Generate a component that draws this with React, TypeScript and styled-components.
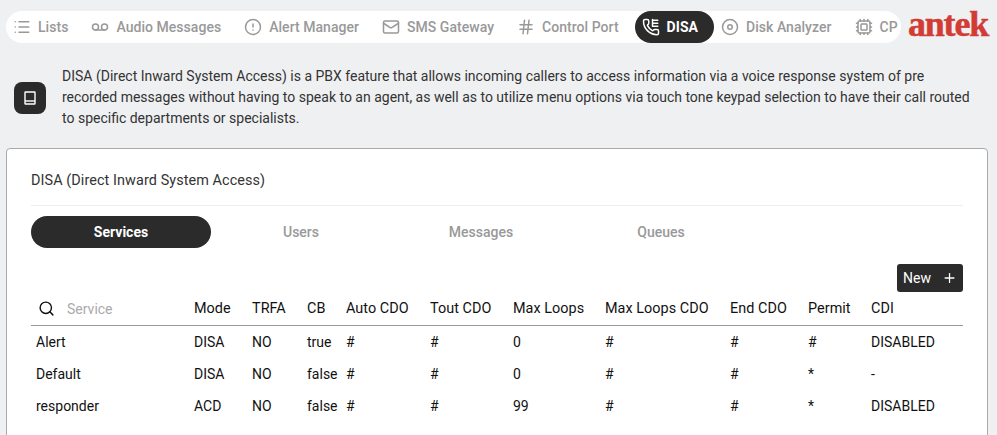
import React from "react";
import styled, { createGlobalStyle } from "styled-components";
import { List, Voicemail, CircleAlert, Mail, Hash, Cpu, Search, Plus } from "lucide-react";

const GlobalStyle = createGlobalStyle`
  html, body {
    margin: 0;
    height: 100%;
    overflow: hidden;
    background: #eff0f2;
    font-family: Roboto, "Liberation Sans", sans-serif;
    font-size: 14px;
    color: #333;
  }
`;

const Page = styled.div`
  padding: 11px 9px 0 6px;
`;

const Header = styled.header`
  display: flex;
  align-items: flex-start;
  gap: 8px;
`;

const Nav = styled.nav`
  flex: 1;
  min-width: 0;
  height: 32px;
  padding-right: 3px;
  border-radius: 16px;
  background: #fff;
`;

const NavScroller = styled.div`
  display: flex;
  height: 100%;
  overflow: hidden;
`;

const NavItem = styled.a<{ $active?: boolean }>`
  display: flex;
  flex-shrink: 0;
  align-items: center;
  gap: 8px;
  padding: 0 16px 0 8px;
  border-radius: 16px;
  font-weight: ${(p) => (p.$active ? 700 : 500)};
  letter-spacing: 0.04px;
  color: ${(p) => (p.$active ? "#fff" : "#999")};
  background: ${(p) => (p.$active ? "#2b2b2b" : "transparent")};

  svg {
    margin: 0 -1px;
  }
`;

const Logo = styled.div`
  width: 80px;
  height: 32px;
  margin: -8px 0 0 -1px;
  font-family: "Liberation Serif", serif;
  font-size: 36px;
  font-weight: 700;
  line-height: 42px;
  letter-spacing: -1.2px;
  white-space: nowrap;
  color: #d23c34;
  -webkit-text-stroke: 0.5px #d23c34;
`;

const Intro = styled.section`
  display: flex;
  align-items: center;
  gap: 16px;
  margin: 23px 0 19px 8px;
`;

const IntroIcon = styled.div`
  display: flex;
  flex-shrink: 0;
  align-items: center;
  justify-content: center;
  width: 32px;
  height: 32px;
  border-radius: 8px;
  background: #2b2b2b;
  color: #fff;
`;

const IntroText = styled.p`
  max-width: 912px;
  margin: 0;
  font-size: 14px;
  line-height: 21px;
  color: #333;
`;

const Card = styled.main`
  height: 320px;
  padding: 20px 24px 16px;
  border: 1px solid #aaa;
  border-radius: 4px;
  background: #fff;
`;

const CardTitle = styled.h2`
  margin: 0;
  padding-bottom: 12px;
  border-bottom: 1px solid #eee;
  font-size: 14.4px;
  font-weight: 400;
  letter-spacing: 0.09px;
  line-height: 24px;
  color: #333;
`;

const Tabs = styled.div`
  display: flex;
  margin-top: 10px;
`;

const Tab = styled.div<{ $active?: boolean }>`
  width: 180px;
  height: 32px;
  border-radius: 16px;
  font-weight: ${(p) => (p.$active ? 700 : 500)};
  line-height: 32px;
  text-align: center;
  color: ${(p) => (p.$active ? "#fff" : "#999")};
  background: ${(p) => (p.$active ? "#2b2b2b" : "transparent")};
`;

const Actions = styled.div`
  display: flex;
  justify-content: flex-end;
  margin-top: 16px;
`;

const NewButton = styled.button`
  display: flex;
  align-items: center;
  gap: 11px;
  width: 66px;
  height: 28px;
  padding: 0 6px;
  border: 0;
  border-radius: 3px;
  background: #2b2b2b;
  color: #fff;
  font: 400 14px Roboto, sans-serif;
`;

const Row = styled.div<{ $head?: boolean }>`
  display: grid;
  grid-template-columns: 163px 58px 55px 39px 84px 83px 92px 125px 78px 63px 1fr;
  align-items: center;
  height: ${(p) => (p.$head ? "33px" : "32px")};
  ${(p) => (p.$head ? "border-bottom: 1px solid #999;" : "")}
  color: #111;
`;

const HeadCell = styled.div`
  font-size: 14.4px;
  letter-spacing: 0.05px;
  white-space: nowrap;
`;

const SearchCell = styled.div`
  display: flex;
  align-items: center;
  gap: 12px;
  padding-left: 7px;
  color: #aaa;
`;

const NameCell = styled.div`
  padding-left: 5px;
`;

const Cell = styled.div``;

const DisaIcon = () => (
  <svg width="18" height="18" viewBox="0 0 24 24" fill="none" stroke="currentColor" strokeWidth="2" strokeLinecap="round" strokeLinejoin="round">
    <path d="M13.8 16.8a1 1 0 0 0 1.2-.3l.4-.5a2 2 0 0 1 1.6-.8h3a2 2 0 0 1 2 2v3a2 2 0 0 1-2 2A18 18 0 0 1 2 4a2 2 0 0 1 2-2h3a2 2 0 0 1 2 2v3a2 2 0 0 1-.8 1.6l-.5.3a1 1 0 0 0-.3 1.3 14 14 0 0 0 6.4 6.6z" />
    <path d="M14 2v9M14 3h7M14 7h7M14 11h7" />
  </svg>
);

const TargetIcon = () => (
  <svg width="18" height="18" viewBox="0 0 24 24" fill="none" stroke="currentColor" strokeWidth="2">
    <circle cx="12" cy="12" r="10" />
    <circle cx="12" cy="12" r="3" />
  </svg>
);

const BookIcon = () => (
  <svg width="16" height="16" viewBox="0 0 16 16" fill="none" stroke="currentColor" strokeWidth="1.4">
    <rect x="3" y="2" width="10" height="12" rx="0.5" />
    <path d="M3 11h10" />
  </svg>
);

const navItems = [
  { label: "Lists", icon: List },
  { label: "Audio Messages", icon: Voicemail },
  { label: "Alert Manager", icon: CircleAlert },
  { label: "SMS Gateway", icon: Mail },
  { label: "Control Port", icon: Hash },
  { label: "DISA", icon: DisaIcon, active: true },
  { label: "Disk Analyzer", icon: TargetIcon },
  { label: "CPU", icon: Cpu },
];

const columns = ["Mode", "TRFA", "CB", "Auto CDO", "Tout CDO", "Max Loops", "Max Loops CDO", "End CDO", "Permit", "CDI"];

const services = [
  ["Alert", "DISA", "NO", "true", "#", "#", "0", "#", "#", "#", "DISABLED"],
  ["Default", "DISA", "NO", "false", "#", "#", "0", "#", "#", "*", "-"],
  ["responder", "ACD", "NO", "false", "#", "#", "99", "#", "#", "*", "DISABLED"],
];

export default function App() {
  return (
    <Page>
      <GlobalStyle />
      <Header>
        <Nav>
          <NavScroller>
            {navItems.map((item) => (
              <NavItem key={item.label} $active={item.active}>
                <item.icon size={18} />
                {item.label}
              </NavItem>
            ))}
          </NavScroller>
        </Nav>
        <Logo>antek</Logo>
      </Header>

      <Intro>
        <IntroIcon>
          <BookIcon />
        </IntroIcon>
        <IntroText>
          DISA (Direct Inward System Access) is a PBX feature that allows incoming callers to access information via a
          voice response system of pre recorded messages without having to speak to an agent, as well as to utilize menu
          options via touch tone keypad selection to have their call routed to specific departments or specialists.
        </IntroText>
      </Intro>

      <Card>
        <CardTitle>DISA (Direct Inward System Access)</CardTitle>
        <Tabs>
          <Tab $active>Services</Tab>
          <Tab>Users</Tab>
          <Tab>Messages</Tab>
          <Tab>Queues</Tab>
        </Tabs>
        <Actions>
          <NewButton>
            New
            <Plus size={16} />
          </NewButton>
        </Actions>
        <Row $head>
          <SearchCell>
            <Search size={17} color="#111" />
            Service
          </SearchCell>
          {columns.map((c) => (
            <HeadCell key={c}>{c}</HeadCell>
          ))}
        </Row>
        {services.map(([name, ...rest]) => (
          <Row key={name}>
            <NameCell>{name}</NameCell>
            {rest.map((v, i) => (
              <Cell key={i}>{v}</Cell>
            ))}
          </Row>
        ))}
      </Card>
    </Page>
  );
}
